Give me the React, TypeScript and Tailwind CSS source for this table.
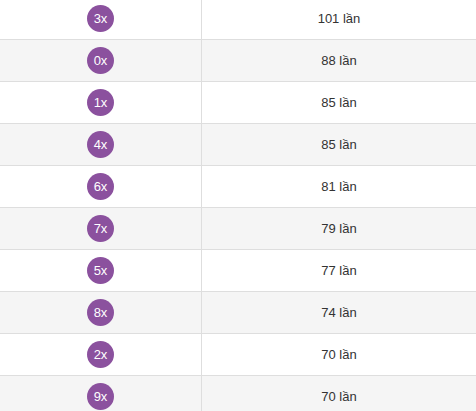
const rows = [
  { n: "3x", c: 101 },
  { n: "0x", c: 88 },
  { n: "1x", c: 85 },
  { n: "4x", c: 85 },
  { n: "6x", c: 81 },
  { n: "7x", c: 79 },
  { n: "5x", c: 77 },
  { n: "8x", c: 74 },
  { n: "2x", c: 70 },
  { n: "9x", c: 70 },
];

export default function App() {
  return (
    <div className="w-[476px] h-[411px] overflow-hidden bg-white font-['Liberation_Sans',Arial,sans-serif] text-[13px] text-[#333]">
      <div className="-mt-[2px]">
        {rows.map((r, i) => (
          <div
            key={r.n}
            className={`flex h-[42px] border-b border-[#dedede] ${i % 2 === 1 ? "bg-[#f5f5f5]" : "bg-white"}`}
          >
            <div className="w-[202px] flex items-center justify-center border-r border-[#dedede]">
              <span className="w-[27px] h-[27px] rounded-full bg-[#8b519e] text-white flex items-center justify-center leading-none">
                {r.n}
              </span>
            </div>
            <div className="flex-1 flex items-center justify-center">{r.c} lần</div>
          </div>
        ))}
      </div>
    </div>
  );
}
